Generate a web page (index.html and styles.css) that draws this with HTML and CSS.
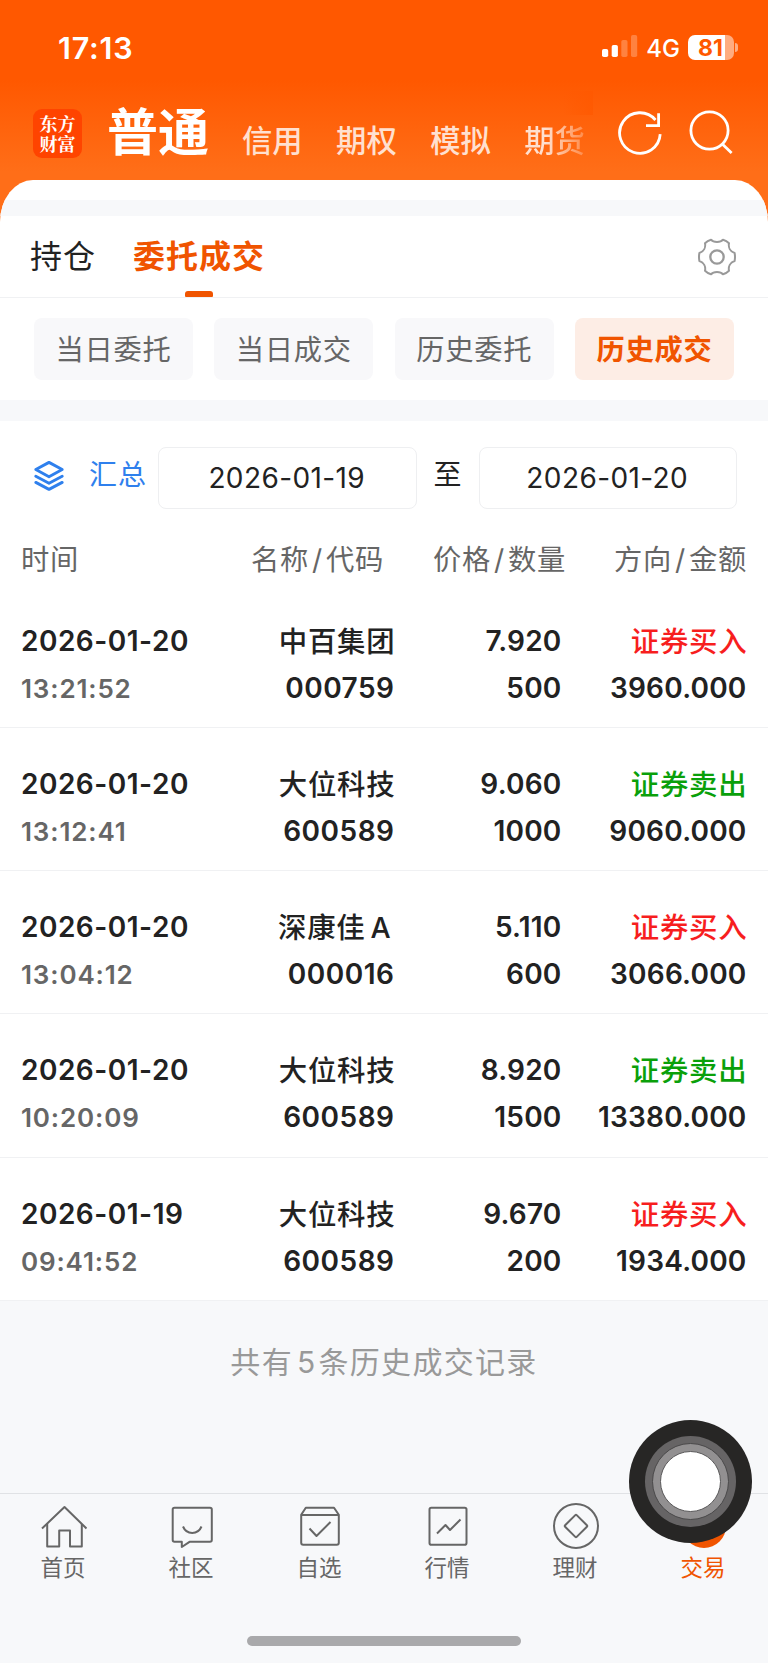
FILE: index.html
```
<!DOCTYPE html>
<html lang="zh-CN">
<head>
  <meta charset="UTF-8" />
  <meta name="viewport" content="width=device-width, initial-scale=1.0"/>
  <title>历史成交</title>
  <link rel="stylesheet" href="styles.css">
</head>
<body>

  <header>
    <div class="statusbar">
      <span class="clock">17:13</span>
      <div class="status-icons">
        <svg class="signal" width="36" height="24" viewBox="0 0 36 24" fill="#fff">
          <rect x="0" y="14" width="6.2" height="8" rx="1.8"/>
          <rect x="9.7" y="10" width="6.2" height="12" rx="1.8"/>
          <rect x="19.3" y="5" width="6.2" height="17" rx="1.8" opacity="0.25"/>
          <rect x="29" y="0" width="6.2" height="22" rx="1.8" opacity="0.25"/>
        </svg>
        <span class="network">4G</span>
        <div class="battery">81</div>
        <div class="battery-cap"></div>
      </div>
    </div>

    <div class="topnav">
      <div class="logo"><span>东方</span><span>财富</span></div>
      <h1>普通</h1>
      <nav class="accounts">
        <a>信用</a>
        <a>期权</a>
        <a>模拟</a>
        <a class="faded">期货</a>
      </nav>
      <svg class="refresh" width="46" height="46" viewBox="0 0 46 46" fill="none" stroke="#fff" stroke-width="2.8">
        <path d="M43.2 24.2A20.3 20.3 0 1 1 38.5 10"/>
        <path d="M41.6 3.3V15.6H29"/>
      </svg>
      <svg class="search" width="46" height="46" viewBox="0 0 46 46" fill="none" stroke="#fff" stroke-width="2.8">
        <circle cx="21.5" cy="20.5" r="18.6"/>
        <path d="M34 33.8L43.6 43"/>
      </svg>
    </div>
  </header>

  <main>
    <div class="strip"></div>

    <div class="tabs">
      <a class="tab">持仓</a>
      <a class="tab active">委托成交</a>
      <svg class="gear" width="40" height="40" viewBox="-20 -20 40 40" fill="none" stroke="#999" stroke-width="2" stroke-linejoin="round">
        <path d="M-6 -17.3C-3.5 -14.3 3.5 -14.3 6 -17.3Q9.5 -16.3 12 -13.8C11.2 -9.8 13 -5.5 17.6 -4Q18.4 0 17.6 4C13 5.5 11.2 9.8 12 13.8Q9.5 16.3 6 17.3C3.5 14.3 -3.5 14.3 -6 17.3Q-9.5 16.3 -12 13.8C-11.2 9.8 -13 5.5 -17.6 4Q-18.4 0 -17.6 -4C-13 -5.5 -11.2 -9.8 -12 -13.8Q-9.5 -16.3 -6 -17.3Z"/>
        <circle cx="0" cy="0" r="6.7" stroke-width="2.3"/>
      </svg>
    </div>

    <div class="chips">
      <button>当日委托</button>
      <button>当日成交</button>
      <button>历史委托</button>
      <button class="active">历史成交</button>
    </div>

    <div class="strip wide"></div>

    <div class="filter">
      <svg width="32" height="32" viewBox="0 0 32 32" fill="none" stroke="#2f80ed" stroke-width="2.9" stroke-linejoin="round" stroke-linecap="round">
        <path d="M16 2.4L29.2 9.5L16 16.7L2.8 9.5Z"/>
        <path d="M2.8 16.2L16 23.2L29.2 16.2"/>
        <path d="M2.8 22.4L16 29.4L29.2 22.4"/>
      </svg>
      <a class="summary">汇总</a>
      <div class="date">2026-01-19</div>
      <span class="to">至</span>
      <div class="date">2026-01-20</div>
    </div>

    <div class="row head">
      <span>时间</span>
      <span>名称<i>/</i>代码</span>
      <span>价格<i>/</i>数量</span>
      <span>方向<i>/</i>金额</span>
    </div>

    <div class="row">
      <div class="time"><b>2026-01-20</b><small>13:21:52</small></div>
      <div class="code"><b class="cn">中百集团</b><b>000759</b></div>
      <div><b>7.920</b><b>500</b></div>
      <div><b class="cn buy">证券买入</b><b>3960.000</b></div>
    </div>
    <div class="row">
      <div class="time"><b>2026-01-20</b><small>13:12:41</small></div>
      <div class="code"><b class="cn">大位科技</b><b>600589</b></div>
      <div><b>9.060</b><b>1000</b></div>
      <div><b class="cn sell">证券卖出</b><b>9060.000</b></div>
    </div>
    <div class="row">
      <div class="time"><b>2026-01-20</b><small>13:04:12</small></div>
      <div class="code"><b class="cn">深康佳<span class="share">A</span></b><b>000016</b></div>
      <div><b>5.110</b><b>600</b></div>
      <div><b class="cn buy">证券买入</b><b>3066.000</b></div>
    </div>
    <div class="row">
      <div class="time"><b>2026-01-20</b><small>10:20:09</small></div>
      <div class="code"><b class="cn">大位科技</b><b>600589</b></div>
      <div><b>8.920</b><b>1500</b></div>
      <div><b class="cn sell">证券卖出</b><b>13380.000</b></div>
    </div>
    <div class="row">
      <div class="time"><b>2026-01-19</b><small>09:41:52</small></div>
      <div class="code"><b class="cn">大位科技</b><b>600589</b></div>
      <div><b>9.670</b><b>200</b></div>
      <div><b class="cn buy">证券买入</b><b>1934.000</b></div>
    </div>
  </main>

  <p class="count">共有<span>5</span>条历史成交记录</p>

  <footer>
    <a>
      <svg width="48" height="48" viewBox="0 0 48 48">
        <path d="M2 25.5L24.5 4L46.5 25.5"/>
        <path d="M7.2 21V43.5H19.2V27.5H30V43.5H41.8V21"/>
      </svg>
      <span>首页</span>
    </a>
    <a>
      <svg width="48" height="48" viewBox="0 0 48 48">
        <path d="M6.5 4.7H42Q43.8 4.7 43.8 6.5V37Q43.8 38.8 42 38.8H21.5L13.8 44V38.8H6.5Q4.7 38.8 4.7 37V6.5Q4.7 4.7 6.5 4.7Z"/>
        <path d="M15 23.5C18.5 32 30 32 33.5 23.5"/>
      </svg>
      <span>社区</span>
    </a>
    <a>
      <svg width="48" height="48" viewBox="0 0 48 48">
        <path d="M5.2 11.7L9.8 4.7H38L42.8 11.7V39.8Q42.8 41.8 40.8 41.8H7.2Q5.2 41.8 5.2 39.8Z"/>
        <path d="M5.2 12H42.8"/>
        <path d="M13.5 25.5L20.5 33L34.5 19"/>
      </svg>
      <span>自选</span>
    </a>
    <a>
      <svg width="48" height="48" viewBox="0 0 48 48">
        <rect x="5.5" y="4.7" width="37" height="37" rx="1.8"/>
        <path d="M13 30.5L21.5 22L26 27L36.5 16.5"/>
      </svg>
      <span>行情</span>
    </a>
    <a>
      <svg width="48" height="48" viewBox="0 0 48 48">
        <circle cx="24" cy="23" r="22"/>
        <rect x="15.8" y="14.8" width="16.4" height="16.4" rx="1" transform="rotate(45 24 23)"/>
      </svg>
      <span>理财</span>
    </a>
    <a class="active">
      <svg width="48" height="48" viewBox="0 0 48 48">
        <circle cx="24" cy="23" r="22"/>
      </svg>
      <span>交易</span>
    </a>
  </footer>
  <div class="home-indicator"></div>

  <div class="assistive"><div class="ring"><div class="ring inner"><div class="dot"></div></div></div></div>

</body>
</html>
```
FILE: styles.css
```
:root {
  --orange: #f05400;
  --text: #222;
  --grey: #666;
  --bg: #f7f8fa;
}

* {
  box-sizing: border-box;
}

body {
  font-family: Inter, "Noto Sans CJK SC", sans-serif;
  background-color: var(--bg);
  color: var(--text);
  margin: 0;
  height: 1663px;
  position: relative;
  display: flex;
  flex-direction: column;
  overflow: hidden;
}

header {
  height: 222px;
  background: linear-gradient(#ff5800 80px, #ff6e18 172px);
  color: white;
  flex-shrink: 0;
}

.statusbar {
  height: 94px;
  display: flex;
  justify-content: space-between;
  align-items: center;
  padding: 0 30px 0 58px;
}

.clock {
  font-size: 30.5px;
  font-weight: 600;
  letter-spacing: 0.8px;
}

.status-icons {
  display: flex;
  align-items: center;
}

.network {
  font-size: 24px;
  font-weight: 500;
  margin: 2px 8px 0 8px;
}

.battery {
  width: 46px;
  height: 25px;
  border-radius: 7px;
  background: linear-gradient(to right, #fff 80%, #ffac80 80%);
  color: #ff5800;
  font-size: 23px;
  font-weight: 700;
  line-height: 26px;
  text-align: center;
  padding-right: 1px;
}

.battery-cap {
  width: 3px;
  height: 9px;
  margin-left: 1px;
  border-radius: 0 4px 4px 0;
  background: #ffac80;
}

.topnav {
  height: 78px;
  display: flex;
  align-items: center;
  padding-left: 33px;
}

.logo {
  width: 49px;
  height: 49px;
  border-radius: 9px;
  background: #ff4400;
  font-family: "Noto Serif CJK SC", "Noto Sans CJK SC", serif;
  font-size: 18px;
  font-weight: 700;
  line-height: 20px;
  text-align: center;
  padding-top: 4px;
}

.logo span {
  display: block;
}

h1 {
  font-size: 51px;
  line-height: 60px;
  font-weight: 700;
  margin: 0 0 0 25px;
}

.accounts {
  position: relative;
  display: flex;
  gap: 33.5px;
  width: 351px;
  margin-left: 33px;
  font-size: 30.3px;
  font-weight: 500;
  line-height: 40px;
  padding-top: 16px;
  color: #ffe0d0;
}

/* scroll edge */
.accounts::after {
  content: "";
  position: absolute;
  right: 0;
  top: -14px;
  width: 30px;
  height: 24px;
  background: linear-gradient(to right, rgba(255, 88, 0, 0), rgba(255, 88, 0, 0.7));
}

.faded {
  background: linear-gradient(to right, #ffe0d0 35%, #ff8a48 100%);
  -webkit-background-clip: text;
  background-clip: text;
  color: transparent;
}

.refresh {
  margin-left: 24px;
}

.search {
  margin-left: 25px;
}

main {
  background: white;
  border-radius: 33px 33px 0 0 / 42px 42px 0 0;
  margin-top: -42px;
  padding-top: 19.5px;
  overflow: hidden;
  flex-shrink: 0;
}

.strip {
  height: 16px;
  background: var(--bg);
}

.strip.wide {
  height: 21px;
}

.tabs {
  height: 82.5px;
  display: flex;
  align-items: center;
  padding: 0 31px 0 30px;
  border-bottom: 1px solid #f0f1f3;
}

.tab {
  font-size: 32px;
  letter-spacing: 1px;
  margin-right: 37px;
  height: 81px;
  line-height: 82px;
}

.tab.active {
  position: relative;
  color: var(--orange);
  font-weight: 700;
}

.tab.active::after {
  content: "";
  position: absolute;
  left: 52px;
  bottom: 0;
  width: 28px;
  height: 6px;
  border-radius: 3px 3px 1px 1px;
  background: var(--orange);
}

.gear {
  margin-left: auto;
  margin-top: 1px;
}

.chips {
  display: flex;
  gap: 21.5px;
  padding: 20px 34px;
}

.chips button {
  flex: 1;
  height: 62px;
  border: none;
  border-radius: 8px;
  background: #f8f8fa;
  color: var(--grey);
  font-family: inherit;
  font-size: 28.3px;
  letter-spacing: 0.7px;
  padding: 0 0 3px 0;
}

.chips button.active {
  background: #fdede5;
  color: var(--orange);
  font-weight: 700;
}

.filter {
  height: 108px;
  display: flex;
  align-items: center;
  padding: 6px 31px 0 33px;
}

.filter svg {
  margin-top: -4px;
}

.summary {
  color: #2f80ed;
  font-size: 28px;
  letter-spacing: 1px;
  margin: -10px 11px 0 24px;
}

.date {
  flex: 1;
  height: 62px;
  border: 1px solid #eeeff1;
  border-radius: 8px;
  font-size: 28px;
  letter-spacing: 0.4px;
  line-height: 61px;
  text-align: center;
  padding-right: 1px;
}

.to {
  font-size: 28px;
  margin: -10px 17px 0;
}

.row {
  display: grid;
  grid-template-columns: 200px 173.5px 167px 185px;
  padding-left: 21px;
  height: 143.3px;
  padding-top: 33px;
  border-bottom: 1px solid #f0f1f3;
  text-align: right;
}

.row.head {
  height: 55.5px;
  padding-top: 11px;
  border: none;
  color: var(--grey);
  font-size: 28.3px;
  letter-spacing: 0.7px;
  line-height: 40px;
  grid-template-columns: 200px 163px 182px 181px;
}

.row.head :first-child {
  text-align: left;
}

.row i {
  font-style: normal;
  margin: 0 3px;
}

.row b, .row small {
  display: block;
  font-size: 28px;
  font-weight: 600;
  line-height: 47px;
  letter-spacing: 0.2px;
}

.row .time {
  text-align: left;
}

.row .time b, .row .code b {
  letter-spacing: 0.5px;
}

.row b.cn {
  font-size: 28.4px;
  font-weight: 500;
  letter-spacing: 0.8px;
  margin-right: -1px;
}

.row small {
  font-size: 26px;
  letter-spacing: 0.85px;
  color: var(--grey);
}

.share {
  margin: 0 4px 0 5px;
}

.row .buy {
  color: #f71e1e;
}

.row .sell {
  color: #0aa00a;
}

.count {
  margin: 0;
  padding-top: 38px;
  height: 192px;
  line-height: 46px;
  font-size: 30px;
  letter-spacing: 1.3px;
  text-align: center;
  color: #999;
  flex-shrink: 0;
}

.count span {
  margin: 0 2px 0 4px;
}

footer {
  height: 143px;
  display: flex;
  padding-top: 9px;
  border-top: 1px solid #e0e2e5;
  flex-shrink: 0;
}

footer a {
  flex: 1;
  display: flex;
  flex-direction: column;
  align-items: center;
  font-size: 22.5px;
  line-height: 33px;
  color: var(--grey);
}

footer span {
  padding-right: 2px;
}

footer svg {
  fill: none;
  stroke: var(--grey);
  stroke-width: 2;
  stroke-linejoin: round;
}

footer .active {
  color: var(--orange);
}

footer .active svg {
  fill: var(--orange);
  stroke: none;
}

.home-indicator {
  width: 274px;
  height: 10px;
  margin: 0 auto;
  border-radius: 5px;
  background: #a9a9ab;
  flex-shrink: 0;
}

/* floating button above everything */
.assistive {
  position: absolute;
  left: 629px;
  top: 1419.5px;
  width: 123px;
  height: 123px;
  border-radius: 50%;
  background: #272625;
  display: flex;
  align-items: center;
  justify-content: center;
}

.ring {
  width: 91px;
  height: 91px;
  border-radius: 50%;
  background: #666465;
  display: flex;
  align-items: center;
  justify-content: center;
}

.ring.inner {
  width: 77px;
  height: 77px;
  background: #929091;
  border: 1px solid #4a494a;
}

.dot {
  width: 61px;
  height: 61px;
  border-radius: 50%;
  background: white;
  border: 1px solid #5a595a;
}
```
